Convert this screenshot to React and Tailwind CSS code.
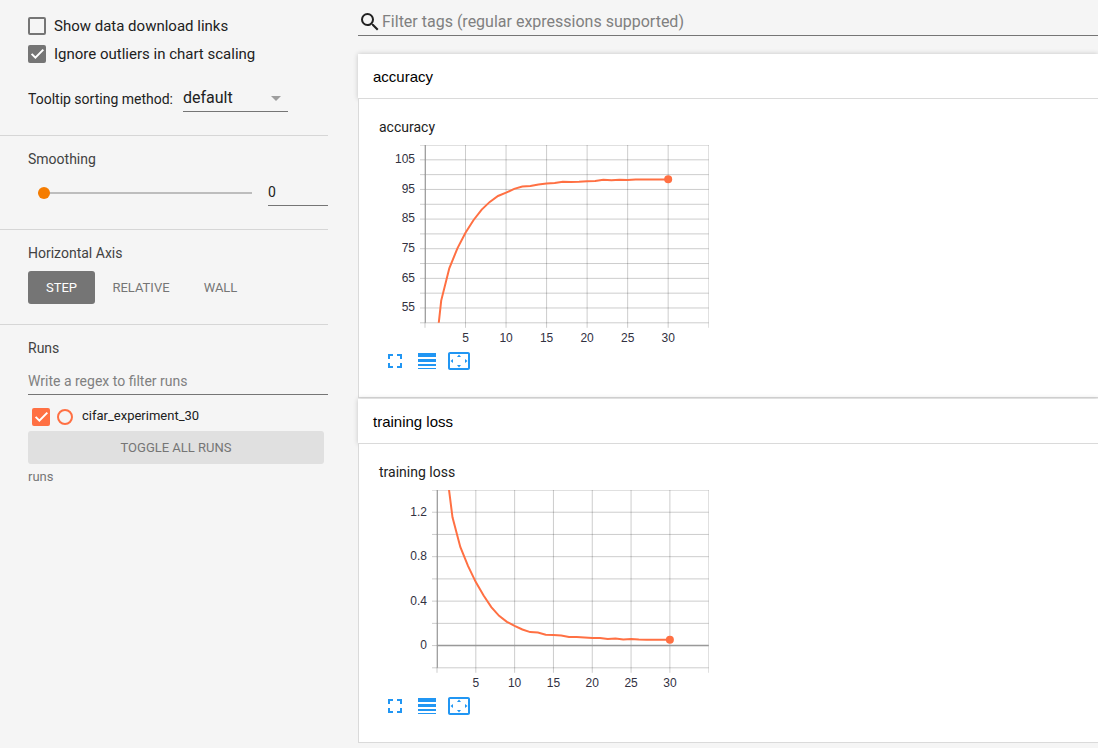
import React from "react";
import { MdSearch, MdFullscreen, MdLineWeight, MdSettingsOverscan } from "react-icons/md";

const ACCURACY = [
  32.5, 57.5, 68.4, 75.1, 80.4, 84.7, 88.2, 90.8, 92.8, 93.9, 95.2, 96, 96.2, 96.7, 97, 97.2, 97.6, 97.5, 97.6, 97.8,
  97.9, 98.3, 98.1, 98.3, 98.2, 98.4, 98.4, 98.4, 98.4, 98.4,
];
const LOSS = [
  1.7, 1.154, 0.887, 0.715, 0.571, 0.451, 0.346, 0.268, 0.214, 0.178, 0.145, 0.121, 0.118, 0.098, 0.095, 0.091, 0.077,
  0.077, 0.073, 0.067, 0.068, 0.058, 0.065, 0.055, 0.059, 0.055, 0.052, 0.052, 0.052, 0.052,
];

function Check({ id, defaultChecked, tone }) {
  const colors =
    tone === "orange" ? "border-[#ff7043] checked:bg-[#ff7043]" : "border-[#757575] checked:bg-[#757575]";
  return (
    <span className="grid size-[18px] shrink-0">
      <input
        id={id}
        type="checkbox"
        defaultChecked={defaultChecked}
        className={`peer col-start-1 row-start-1 size-[18px] appearance-none rounded-xs border-2 ${colors}`}
      />
      <svg
        viewBox="0 0 18 18"
        className="pointer-events-none col-start-1 row-start-1 hidden size-[18px] peer-checked:block"
        aria-hidden="true"
      >
        <path d="M3.6 8.9 L7.4 12.7 L15.3 4.6" fill="none" stroke="#fff" strokeWidth="2" />
      </svg>
    </span>
  );
}

function Section({ title, children, last }) {
  return (
    <section className={`pt-[13px] pl-7 ${last ? "" : "border-b border-[#d6d6d6]"}`}>
      <h3 className="text-sm leading-5 text-[#424242]">{title}</h3>
      {children}
    </section>
  );
}

function Chart({ name, left, min, max, grid, labels, data }) {
  const right = 329.7;
  const bottom = 177.8;
  const x = (v) => left + ((right - left) * v) / 35;
  const y = (v) => (bottom * (max - v)) / (max - min);
  const line = data.map((v, i) => `${x(i + 1).toFixed(1)},${y(v).toFixed(1)}`).join(" ");
  const steps = [5, 10, 15, 20, 25, 30];
  const last = data.length;
  return (
    <svg width="340" height="200" viewBox="0 0 340 200" className="mt-2 block" role="img" aria-label={name}>
      <clipPath id={`clip-${left}`}>
        <rect x={left} y="0" width={right - left + 4} height={bottom} />
      </clipPath>
      <g stroke="#000" strokeOpacity="0.2">
        {grid.map((v) => (
          <line key={v} x1={left - 5} x2={right} y1={y(v)} y2={y(v)} />
        ))}
        {[0, ...steps].map((v) => (
          <line key={v} x1={x(v)} x2={x(v)} y1="0" y2={bottom + 5} />
        ))}
        <line x1={left - 5} x2={right} y1={bottom} y2={bottom} />
        <line x1={left - 5} x2={right} y1="0.5" y2="0.5" strokeOpacity="0.12" />
        <line x1="329.5" x2="329.5" y1="0" y2={bottom + 5} strokeOpacity="0.12" />
      </g>
      <line x1={left + 0.4} x2={left + 0.4} y1="0" y2={bottom} stroke="#999" />
      {min < 0 && <line x1={left} x2={right} y1={y(0)} y2={y(0)} stroke="#999" strokeWidth="1.5" />}
      <polyline points={line} fill="none" stroke="#ff7043" strokeWidth="2" clipPath={`url(#clip-${left})`} />
      <circle cx={x(last)} cy={y(data[last - 1])} r="4" fill="#ff7043" />
      <g fill="#32313f" fontSize="12" fontFamily="'Liberation Sans', Arial, sans-serif">
        {labels.map((v) => (
          <text key={v} x={left - 10} y={Math.round(y(v) + 3.4)} textAnchor="end">
            {v}
          </text>
        ))}
        {steps.map((v) => (
          <text key={v} x={x(v)} y="197" textAnchor="middle">
            {v}
          </text>
        ))}
      </g>
    </svg>
  );
}

const CHART_ACTIONS = [
  ["Fullscreen", MdFullscreen],
  ["Toggle log scale", MdLineWeight],
  ["Fit domain to data", MdSettingsOverscan],
];

function Pane({ name, ...chart }) {
  return (
    <section>
      <button
        type="button"
        className="relative block h-[45px] w-full border-b border-[#dadada] bg-white pt-0.5 pl-[15px] text-left font-['Liberation_Sans',Arial,sans-serif] text-[15px] text-black shadow-[0_0_5px_rgba(0,0,0,0.2)]"
      >
        {name}
      </button>
      <div className="relative border-b border-l border-[#dadada] bg-white pt-[18px] pb-5 pl-5">
        <h4 className="text-sm leading-5 text-[#212121]">{name}</h4>
        <Chart name={`${name} chart`} {...chart} />
        <div className="flex">
          {CHART_ACTIONS.map(([label, Icon]) => (
            <button key={label} type="button" aria-label={label} className="p-1 text-[#2196f3]">
              <Icon className="size-6" />
            </button>
          ))}
        </div>
      </div>
    </section>
  );
}

export default function App() {
  return (
    <div className="flex min-h-screen bg-[#f5f5f5] font-[Roboto,sans-serif] text-[#212121] antialiased">
      <aside className="w-[328px] shrink-0">
        <div className="border-b border-[#d6d6d6] pt-4 pb-[23px] pl-7">
          <div className="flex flex-col gap-2 text-[15px] leading-5">
            <div className="flex items-center gap-2">
              <Check id="links" />
              <label htmlFor="links">Show data download links</label>
            </div>
            <div className="flex items-center gap-2">
              <Check id="outliers" defaultChecked />
              <label htmlFor="outliers">Ignore outliers in chart scaling</label>
            </div>
          </div>
          <div className="mt-5 flex items-center gap-2.5">
            <label htmlFor="sorting" className="pt-0.5 text-sm">
              Tooltip sorting method:
            </label>
            <span className="grid w-[105px] items-center">
              <select
                id="sorting"
                className="col-start-1 row-start-1 h-7 w-full appearance-none border-b border-[#757575] bg-transparent text-base"
              >
                <option>default</option>
              </select>
              <svg
                viewBox="0 0 10 5"
                className="pointer-events-none col-start-1 row-start-1 mr-[7px] h-[5px] w-2.5 justify-self-end"
                aria-hidden="true"
              >
                <path d="M0 0h10L5 5z" fill="#9e9e9e" />
              </svg>
            </span>
          </div>
        </div>

        <Section title="Smoothing">
          <div className="mt-[11px] flex items-center gap-4 pb-[23px] pl-2.5">
            <input
              type="range"
              min="0"
              max="1"
              step="0.001"
              defaultValue="0"
              aria-label="Smoothing"
              className="h-3 min-w-0 flex-1 appearance-none bg-transparent [&::-webkit-slider-runnable-track]:h-0.5 [&::-webkit-slider-runnable-track]:bg-[#bdbdbd] [&::-webkit-slider-thumb]:-mt-[5px] [&::-webkit-slider-thumb]:size-3 [&::-webkit-slider-thumb]:appearance-none [&::-webkit-slider-thumb]:rounded-full [&::-webkit-slider-thumb]:bg-[#f57c00]"
            />
            <input
              type="text"
              defaultValue="0"
              aria-label="Smoothing value"
              className="h-[26px] w-[60px] border-b border-[#757575] bg-transparent pb-0.5 text-sm outline-none"
            />
          </div>
        </Section>

        <Section title="Horizontal Axis">
          <div className="mt-2 flex pb-5 text-[13px] text-[#757575]">
            <button type="button" className="h-[33px] w-[67px] rounded-[3px] bg-[#757575] text-white">
              STEP
            </button>
            <button type="button" className="h-[33px] w-[92px]">
              RELATIVE
            </button>
            <button type="button" className="h-[33px] w-[67px]">
              WALL
            </button>
          </div>
        </Section>

        <Section title="Runs" last>
          <input
            type="text"
            aria-label="Filter runs"
            placeholder="Write a regex to filter runs"
            className="mt-[11px] block h-[26px] w-full border-b border-[#757575] bg-transparent pb-0.5 text-sm outline-none placeholder:text-[#808080]"
          />
          <div className="mt-3 flex h-5 items-center gap-[7px] pl-1">
            <Check id="run" defaultChecked tone="orange" />
            <button
              type="button"
              aria-label="Show only this run"
              className="size-4 shrink-0 rounded-full border-2 border-[#ff7043]"
            />
            <label htmlFor="run" className="pb-0.5 pl-0.5 text-[13px] leading-5">
              cifar_experiment_30
            </label>
          </div>
          <div className="mt-1 pr-1">
            <button type="button" className="h-[33px] w-full rounded-[3px] bg-[#e0e0e0] text-[13px] text-[#757575]">
              TOGGLE ALL RUNS
            </button>
          </div>
          <p className="mt-1 text-[13px] leading-[18px] text-[#757575]">runs</p>
        </Section>
      </aside>

      <main className="ml-[30px] min-w-0 flex-1">
        <div className="flex h-9 items-end border-b border-[#757575]">
          <MdSearch className="mb-px size-6 shrink-0" />
          <input
            type="text"
            aria-label="Filter tags"
            placeholder="Filter tags (regular expressions supported)"
            className="h-7 min-w-0 flex-1 bg-transparent text-base outline-none placeholder:text-[#808080]"
          />
        </div>
        <div className="mt-[18px] flex flex-col gap-px">
          <Pane
            name="accuracy"
            left={46}
            min={50}
            max={110}
            grid={[105, 100, 95, 90, 85, 80, 75, 70, 65, 60, 55]}
            labels={[105, 95, 85, 75, 65, 55]}
            data={ACCURACY}
          />
          <Pane
            name="training loss"
            left={58}
            min={-0.2}
            max={1.4}
            grid={[1.2, 1, 0.8, 0.6, 0.4, 0.2, 0]}
            labels={[1.2, 0.8, 0.4, 0]}
            data={LOSS}
          />
        </div>
      </main>
    </div>
  );
}
